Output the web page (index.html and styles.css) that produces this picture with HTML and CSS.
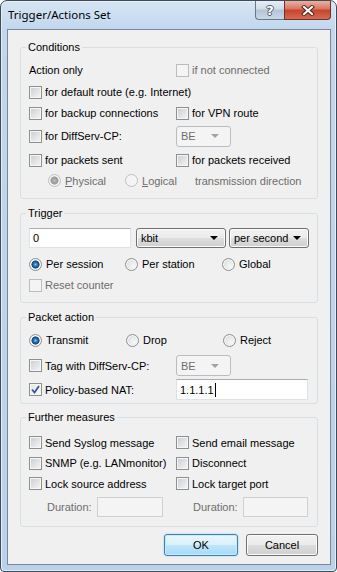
FILE: index.html
```html
<!DOCTYPE html>
<html lang="en">
<head>
    <meta charset="UTF-8">
    <title>Trigger/Actions Set</title>
    <link rel="stylesheet" href="styles.css">
</head>
<body>
    <div class="window">
        <div class="titlebar">
            <span class="title">Trigger/Actions Set</span>
            <div class="caption">
                <div class="cap-btn help">?</div>
                <div class="cap-btn close">
                    <svg width="14" height="11" viewBox="0 0 14 11">
                        <path d="M3 2 L11 9 M11 2 L3 9" stroke="#4a2a24" stroke-width="4" stroke-linecap="square"/>
                        <path d="M3 2 L11 9 M11 2 L3 9" stroke="#fff" stroke-width="2" stroke-linecap="square"/>
                    </svg>
                </div>
            </div>
        </div>

        <div class="client">
            <fieldset class="group conditions">
                <legend>Conditions</legend>
                <div class="cols cond-rows">
                    <div>Action only</div>
                    <div class="chk disabled"><span class="box"></span>if not connected</div>

                    <div class="chk span"><span class="box"></span>for default route (e.g. Internet)</div>

                    <div class="chk"><span class="box"></span>for backup connections</div>
                    <div class="chk"><span class="box"></span>for VPN route</div>

                    <div class="chk"><span class="box"></span>for DiffServ-CP:</div>
                    <div><div class="combo disabled small">BE<span class="arrow"></span></div></div>

                    <div class="chk"><span class="box"></span>for packets sent</div>
                    <div class="chk"><span class="box"></span>for packets received</div>

                    <div class="span direction">
                        <span class="rad disabled on phys"><span class="dot"></span><u>P</u>hysical</span>
                        <span class="rad disabled logi"><span class="dot"></span><u>L</u>ogical</span>
                        <span class="gray">transmission direction</span>
                    </div>
                </div>
            </fieldset>

            <fieldset class="group trigger">
                <legend>Trigger</legend>
                <div class="trigger-inputs">
                    <div class="edit amount">0</div>
                    <div class="combo unit">kbit<span class="arrow"></span></div>
                    <div class="combo period">per second<span class="arrow"></span></div>
                </div>
                <div class="radios trigger-radios">
                    <span class="rad on"><span class="dot"></span>Per session</span>
                    <span class="rad"><span class="dot"></span>Per station</span>
                    <span class="rad"><span class="dot"></span>Global</span>
                </div>
                <div class="chk disabled reset"><span class="box"></span>Reset counter</div>
            </fieldset>

            <fieldset class="group packet">
                <legend>Packet action</legend>
                <div class="radios packet-radios">
                    <span class="rad on"><span class="dot"></span>Transmit</span>
                    <span class="rad"><span class="dot"></span>Drop</span>
                    <span class="rad"><span class="dot"></span>Reject</span>
                </div>
                <div class="cols tag-row">
                    <div class="chk"><span class="box"></span>Tag with DiffServ-CP:</div>
                    <div><div class="combo disabled small">BE<span class="arrow"></span></div></div>
                </div>
                <div class="cols nat-row">
                    <div class="chk checked"><span class="box">
                        <svg width="9" height="9" viewBox="0 0 9 9"><path d="M1 4.5 L3.5 7.5 L8 1" fill="none" stroke="#3a56a0" stroke-width="1.8"/></svg>
                    </span>Policy-based NAT:</div>
                    <div><div class="edit nat">1.1.1.1<span class="caret"></span></div></div>
                </div>
            </fieldset>

            <fieldset class="group further">
                <legend>Further measures</legend>
                <div class="cols further-rows">
                    <div class="chk"><span class="box"></span>Send Syslog message</div>
                    <div class="chk"><span class="box"></span>Send email message</div>
                    <div class="chk"><span class="box"></span>SNMP (e.g. LANmonitor)</div>
                    <div class="chk"><span class="box"></span>Disconnect</div>
                    <div class="chk"><span class="box"></span>Lock source address</div>
                    <div class="chk"><span class="box"></span>Lock target port</div>
                </div>
                <div class="cols duration-row">
                    <div class="duration"><span class="dur-label">Duration:</span><div class="edit disabled dur-left"></div></div>
                    <div class="duration"><span class="dur-label">Duration:</span><div class="edit disabled dur-right"></div></div>
                </div>
            </fieldset>

            <div class="buttons">
                <div class="btn default">OK</div>
                <div class="btn cancel">Cancel</div>
            </div>
        </div>
    </div>
</body>
</html>
```

FILE: styles.css
```css
* {
    box-sizing: border-box;
}
body {
    margin: 0;
    font-family: "Liberation Sans", Arial, sans-serif;
    font-size: 11px;
    color: #000;
    background: #fff;
}
.window {
    width: 337px;
    height: 572px;
    display: flex;
    flex-direction: column;
    border: 1px solid #404b57;
    border-radius: 7px 7px 4px 4px;
    background: linear-gradient(to bottom, #d6e5f4 0, #c2d7ee 28px, #b9d1ea 100%);
    box-shadow: inset 0 0 0 1px #e6eff8;
    overflow: hidden;
}

/* title bar */
.titlebar {
    height: 28px;
    display: flex;
    align-items: flex-start;
    padding-left: 7px;
}
.title {
    font-family: "Noto Sans", "Open Sans", sans-serif;
    font-size: 11.5px;
    margin-top: 6px;
}
.caption {
    margin-left: auto;
    margin-right: 5px;
    display: flex;
}
.cap-btn {
    height: 19px;
    display: flex;
    align-items: center;
    justify-content: center;
    border: 1px solid #6b7785;
    border-top: none;
}
.help {
    width: 29px;
    border-radius: 0 0 0 4px;
    border-right: none;
    background: linear-gradient(to bottom, #e6eef7 0, #cfdbe8 45%, #b3c4d7 50%, #c9d8e8 100%);
    color: #fff;
    font-family: "DejaVu Sans", sans-serif;
    font-weight: bold;
    font-size: 13px;
    text-shadow: 1px 0 #545e6a, -1px 0 #545e6a, 0 1px #545e6a, 0 -1px #545e6a;
}
.close {
    width: 47px;
    border-color: #6d3128;
    border-radius: 0 0 4px 0;
    background: linear-gradient(to bottom, #eab2a4 0, #d9735f 45%, #c6432c 50%, #d76a52 100%);
}

/* client area */
.client {
    flex: 1;
    margin: 0 5px 6px 6px;
    padding: 10px 12px 0;
    border: 1px solid #7b8794;
    background: #f0f0f0;
}
.group {
    margin: 0;
    padding: 0 8px 8px 8px;
    border: 1px solid #d5dfe5;
    border-radius: 3px;
    min-width: 0;
}
.group legend {
    margin-left: -3px;
    padding: 0 2px;
    line-height: 14px;
}
.trigger {
    margin-top: 7px;
}
.packet {
    margin-top: 7px;
    padding-bottom: 3px;
}
.further {
    margin-top: 6px;
    padding-bottom: 9px;
}

.cols {
    display: grid;
    grid-template-columns: 147px 1fr;
}
.cols > div {
    display: flex;
    align-items: center;
    white-space: nowrap;
}
.cols .span {
    grid-column: 1 / 3;
}
.cond-rows {
    padding-top: 5px;
    grid-template-rows: 22px 22px 20px 26px 22px 19px;
}
.direction .phys {
    margin-left: 19px;
    width: 77px;
}
.direction .logi {
    width: 70px;
}

/* checkboxes and radios */
.chk, .rad {
    display: flex;
    align-items: center;
    white-space: nowrap;
}
.box {
    width: 13px;
    height: 13px;
    margin-right: 3px;
    flex: none;
    display: flex;
    align-items: center;
    justify-content: center;
    border: 1px solid #8e8f8f;
    background: linear-gradient(135deg, #c8ccd1 0, #e2e4e7 55%, #f6f6f6 100%);
    box-shadow: inset 0 0 0 1px #f6f6f6;
}
.chk.checked .box {
    background: linear-gradient(135deg, #e4e6ea, #fbfbfb);
}
.disabled, .gray {
    color: #6d6d6d;
}
.chk.disabled .box {
    border-color: #bcbcbc;
    background: #f4f4f4;
    box-shadow: none;
}
.dot {
    width: 13px;
    height: 13px;
    margin-right: 4px;
    flex: none;
    border: 1px solid #8e8f8f;
    border-radius: 50%;
    background: radial-gradient(circle at 65% 65%, #f7f7f7 0, #e1e3e5 60%, #cfd2d6 100%);
    box-shadow: inset 0 0 0 1px #f8f8f8;
}
.rad.on .dot {
    background: radial-gradient(circle at 50% 50%, #8fd0f5 0, #2b7fc4 1.6px, #164e8f 3.2px, #1d5596 3.8px, #f2f2f2 4.4px, #e1e3e5 100%);
}
.rad.disabled .dot {
    border-color: #c0c0c0;
    background: #f4f4f4;
    box-shadow: none;
}
.rad.disabled.on .dot {
    background: radial-gradient(circle at 50% 50%, #bdbdbd 0, #9a9a9a 3px, #a8a8a8 3.8px, #f4f4f4 4.4px);
}

/* edits and combos */
.edit {
    height: 20px;
    padding: 0 3px;
    display: flex;
    align-items: center;
    background: #fff;
    border: 1px solid #dfe3e9;
    border-top-color: #abadb3;
}
.edit.disabled {
    background: #f4f4f4;
    border-color: #d0d0d0;
}
.caret {
    display: inline-block;
    width: 1px;
    height: 14px;
    margin-left: 1px;
    background: #000;
}
.combo {
    height: 20px;
    padding: 0 4px;
    display: flex;
    align-items: center;
    border: 1px solid #707070;
    border-radius: 3px;
    background: linear-gradient(to bottom, #f2f2f2 0, #ebebeb 50%, #dddddd 50%, #cfcfcf 100%);
    box-shadow: inset 0 0 0 1px #fcfcfc;
}
.combo .arrow {
    margin-left: auto;
    margin-right: 3px;
    width: 0;
    height: 0;
    border-left: 4px solid transparent;
    border-right: 4px solid transparent;
    border-top: 4px solid #000;
}
.combo.disabled {
    border-color: #b9bdc1;
    background: #f4f4f4;
    box-shadow: none;
}
.combo.disabled .arrow {
    border-top-color: #a3a3a3;
    margin-right: 7px;
}
.combo.small {
    width: 55px;
    height: 21px;
}

/* trigger */
.trigger-inputs {
    display: flex;
    margin-top: 8px;
}
.amount {
    width: 102px;
}
.unit {
    width: 90px;
    margin-left: 5px;
}
.period {
    width: 80px;
    margin-left: 3px;
}
.radios {
    display: grid;
    height: 20px;
    align-items: center;
}
.trigger-radios {
    margin-top: 6px;
    grid-template-columns: 96px 97px auto;
}
.reset {
    height: 18px;
    margin-top: 2px;
}

/* packet action */
.packet-radios {
    margin-top: 6px;
    grid-template-columns: 97px 97px auto;
}
.tag-row {
    height: 21px;
    margin-top: 5px;
}
.nat-row {
    height: 21px;
    margin-top: 3px;
}
.nat {
    width: 132px;
    height: 21px;
}

/* further measures */
.further-rows {
    margin-top: 8px;
    grid-template-rows: 21px 20px 21px;
}
.duration-row {
    margin-top: 3px;
    height: 20px;
}
.dur-label {
    width: 50px;
    color: #6d6d6d;
}
.duration:first-child {
    padding-left: 18px;
}
.duration + .duration {
    padding-left: 17px;
}
.dur-left {
    width: 66px;
}
.dur-right {
    width: 65px;
}

/* buttons */
.buttons {
    display: flex;
    justify-content: flex-end;
    margin-top: 7px;
}
.btn {
    height: 22px;
    display: flex;
    align-items: center;
    justify-content: center;
    border: 1px solid #707070;
    border-radius: 3px;
    background: linear-gradient(to bottom, #f2f2f2 0, #ebebeb 50%, #dddddd 50%, #cfcfcf 100%);
    box-shadow: inset 0 0 0 1px #fcfcfc;
}
.btn.default {
    width: 74px;
    border-color: #3c7fb1;
    background: linear-gradient(to bottom, #eaf6fd 0, #d9f0fc 50%, #bee6fd 50%, #a7d9f5 100%);
    box-shadow: inset 0 0 0 1px #c9eafc, 0 0 2px #8ad0f5;
}
.btn.cancel {
    width: 72px;
    margin-left: 8px;
}
```
